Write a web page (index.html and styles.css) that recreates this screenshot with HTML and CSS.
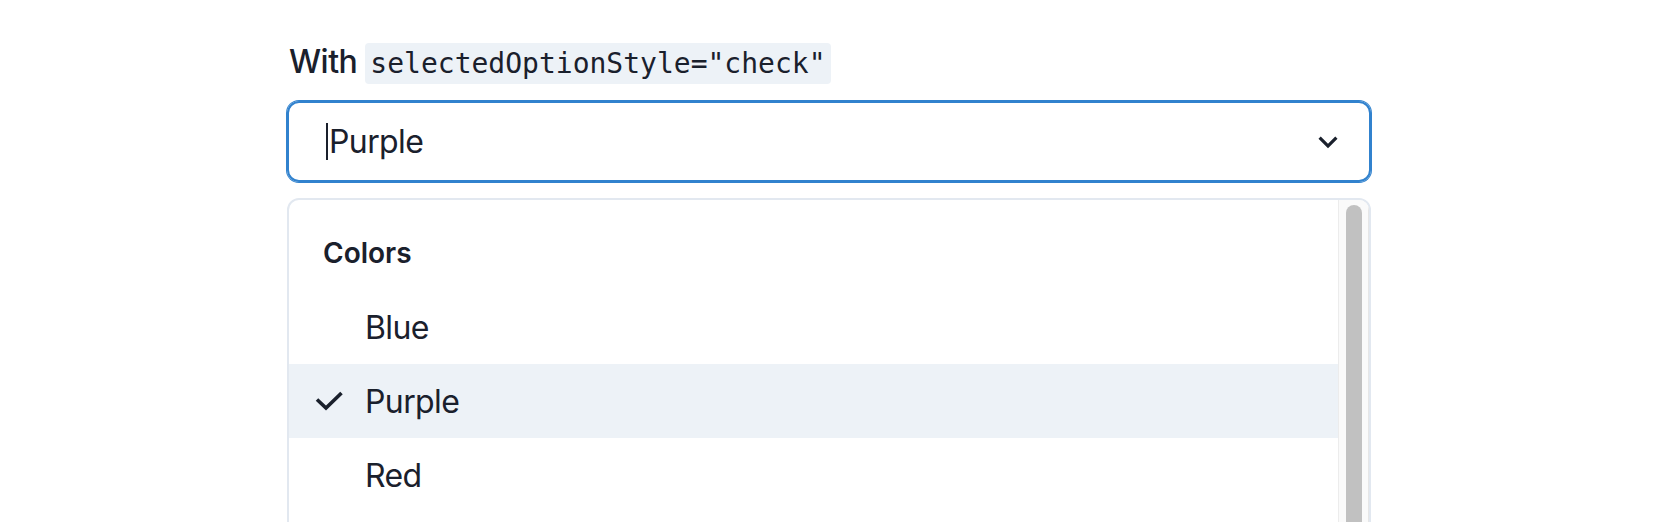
FILE: index.html
```html
<!DOCTYPE html>
<html lang="en">
<head>
<meta charset="utf-8">
<title>Select with check</title>
<link rel="stylesheet" href="styles.css">
</head>
<body>
<div class="page">
  <div class="field">
    <div class="label">With <code class="code">selectedOptionStyle="check"</code></div>
    <div class="control">
      <div class="value"><span class="caret"></span>Purple</div>
      <svg class="chevron" viewBox="0 0 24 24" aria-hidden="true"><path fill="currentColor" d="M16.59 8.59L12 13.17 7.41 8.59 6 10l6 6 6-6z"/></svg>
    </div>
    <div class="menu">
      <div class="list">
        <div class="group-heading">Colors</div>
        <div class="option"><span class="check"></span><span class="opt-text">Blue</span></div>
        <div class="option selected"><span class="check"><svg viewBox="0 0 28 20" aria-hidden="true"><path d="M2 8.5 L11 17 L26.5 2" fill="none" stroke="currentColor" stroke-width="3.6"/></svg></span><span class="opt-text">Purple</span></div>
        <div class="option"><span class="check"></span><span class="opt-text">Red</span></div>
      </div>
      <div class="track"><div class="thumb"></div></div>
    </div>
  </div>
</div>
</body>
</html>
```
FILE: styles.css
```css
html, body {
  margin: 0;
  padding: 0;
  background: #ffffff;
  height: 522px;
  overflow: hidden;
}
body {
  font-family: Inter, "Noto Sans", "Liberation Sans", sans-serif;
  color: #1a202c;
}
.page {
  padding: 38px 0 0 287px;
}
.field {
  width: 1084px;
}
.label {
  font-size: 32px;
  line-height: 48px;
  font-weight: 500;
  padding-left: 2px;
  letter-spacing: -0.5px;
}
.code {
  display: inline-block;
  font-family: "DejaVu Sans Mono", "Liberation Mono", monospace;
  font-size: 28px;
  line-height: 41px;
  height: 41px;
  padding: 0 5px;
  background: #edf2f7;
  border-radius: 4px;
  vertical-align: baseline;
  letter-spacing: 0;
}
.control {
  margin-top: 15px;
  box-sizing: border-box;
  height: 81px;
  border: 2px solid #3182ce;
  box-shadow: 0 0 0 1px #3182ce;
  border-radius: 12px;
  display: flex;
  align-items: center;
  justify-content: space-between;
  padding: 0 22px 0 37px;
}
.value {
  font-size: 32px;
  letter-spacing: -0.6px;
  display: flex;
  align-items: center;
}
.caret {
  display: inline-block;
  width: 2px;
  height: 37px;
  background: #1a202c;
  margin-right: 1px;
}
.chevron {
  width: 38px;
  height: 38px;
  color: #1a202c;
}
.menu {
  margin-top: 16px;
  box-sizing: border-box;
  height: 340px;
  border: 2px solid #e2e8f0;
  border-radius: 12px;
  display: flex;
  overflow: hidden;
}
.list {
  flex: 1;
  padding-top: 16px;
}
.group-heading {
  font-size: 28px;
  font-weight: 600;
  line-height: 42px;
  padding: 16px 34px;
}
.option {
  height: 74px;
  display: flex;
  align-items: center;
  padding-left: 26px;
  font-size: 32px;
  letter-spacing: -0.6px;
}
.option.selected {
  background: #edf2f7;
}
.check {
  width: 28px;
  height: 20px;
  margin-right: 22px;
  display: flex;
}
.check svg {
  width: 28px;
  height: 20px;
  color: #1a202c;
}
.track {
  width: 29px;
  background: #fafafa;
  border-left: 1px solid #ececec;
  border-right: 1px solid #e6e6e6;
  padding-top: 5px;
  display: flex;
  justify-content: center;
}
.thumb {
  width: 16px;
  height: 400px;
  background: #c1c1c1;
  border-radius: 8px;
}
```
